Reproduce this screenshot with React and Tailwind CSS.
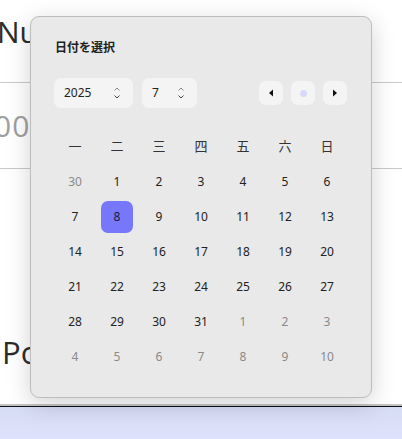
import React, { useState } from "react";

const weekdays = ["一", "二", "三", "四", "五", "六", "日"];

// July 2025 grid, monday first
const days = [
  [30, 1, 2, 3, 4, 5, 6],
  [7, 8, 9, 10, 11, 12, 13],
  [14, 15, 16, 17, 18, 19, 20],
  [21, 22, 23, 24, 25, 26, 27],
  [28, 29, 30, 31, 1, 2, 3],
  [4, 5, 6, 7, 8, 9, 10],
];

function Spinner() {
  return (
    <svg width="8" height="14" viewBox="0 0 8 14" fill="none">
      <path d="M1.5 4.5 L4 2 L6.5 4.5" stroke="#8a8a8a" strokeWidth="1" />
      <path d="M1.5 9.5 L4 12 L6.5 9.5" stroke="#444" strokeWidth="1" />
    </svg>
  );
}

function NumberBox({ value, width }) {
  return (
    <div
      className={`flex items-center justify-between h-[30px] ${width} rounded-[7px] bg-[#f4f4f4] pl-[10px] pr-[12px] text-[12px] text-[#222]`}
    >
      <span>{value}</span>
      <Spinner />
    </div>
  );
}

function NavButton({ children }) {
  return (
    <button className="flex items-center justify-center w-[24px] h-[24px] rounded-[7px] bg-[#f4f4f4]">
      {children}
    </button>
  );
}

export default function App() {
  const [selected, setSelected] = useState("1-1");

  return (
    <div className="relative w-[402px] h-[439px] overflow-hidden bg-white" style={{ fontFamily: '"Open Sans", "Noto Sans", sans-serif' }}>
      {/* page behind the popup */}
      <div className="flex flex-col">
        <div className="h-[83px] border-b border-[#c9c9c9] pt-[10px]">
          <span className="block -ml-[3px] text-[30px] leading-[44px] text-[#2c2c2c]">Number</span>
        </div>
        <div className="h-[86px] border-b border-[#c9c9c9] flex items-center">
          <span className="-ml-[6px] text-[30px] text-[#a0a0a0] tracking-[1px]">000</span>
        </div>
        <div className="h-[153px]"></div>
        <div className="h-[60px] flex items-center">
          <span className="ml-[2px] text-[31px] text-[#2c2c2c]">Post</span>
        </div>
        <div className="h-[22px]"></div>
        <div className="h-[2px] bg-[#c4c4c4]"></div>
        <div className="h-[1px] bg-[#111]"></div>
        <div className="h-[40px] bg-gradient-to-b from-[#d8ddf6] to-[#dfe3fd]"></div>
      </div>

      {/* date picker popup */}
      <div
        className="absolute left-[30px] top-[16px] w-[342px] h-[382px] rounded-[9px] border border-[#bdbdbd] bg-[#e9e9e9] shadow-[0_6px_24px_rgba(0,0,0,0.18)] px-[23px] pt-[22px]"
        style={{ fontFamily: '"Noto Sans", "Noto Sans CJK JP", sans-serif' }}
      >
        <div className="text-[12px] font-bold leading-[18px] text-[#222] pl-[1px]">日付を選択</div>

        <div className="mt-[21px] flex items-center">
          <NumberBox value="2025" width="w-[79px]" />
          <div className="w-[9px]"></div>
          <NumberBox value="7" width="w-[55px]" />
          <div className="ml-auto flex gap-[8px] pr-[1px]">
            <NavButton>
              <svg width="6" height="8" viewBox="0 0 6 8">
                <path d="M5 0.5 L1 4 L5 7.5 Z" fill="#111" />
              </svg>
            </NavButton>
            <NavButton>
              <span className="block w-[7px] h-[7px] rounded-full bg-[#d8d8fb]"></span>
            </NavButton>
            <NavButton>
              <svg width="6" height="8" viewBox="0 0 6 8">
                <path d="M1 0.5 L5 4 L1 7.5 Z" fill="#111" />
              </svg>
            </NavButton>
          </div>
        </div>

        <div className="mt-[21px] grid grid-cols-7">
          {weekdays.map((w) => (
            <div key={w} className="h-[35px] flex items-center justify-center text-[13px] text-[#333]">
              {w}
            </div>
          ))}
          {days.map((row, r) =>
            row.map((d, c) => {
              const outside = (r === 0 && d > 7) || (r >= 4 && d < 15);
              const key = `${r}-${c}`;
              const isSel = selected === key;
              return (
                <div key={key} className="h-[35px] flex items-center justify-center">
                  <button
                    onClick={() => setSelected(key)}
                    className={`w-[32px] h-[32px] rounded-[7px] flex items-center justify-center text-[12px] ${
                      isSel ? "bg-[#7777fb] text-[#1a1a40]" : outside ? "text-[#8a8a8a]" : "text-[#222]"
                    }`}
                  >
                    {d}
                  </button>
                </div>
              );
            })
          )}
        </div>
      </div>
    </div>
  );
}
